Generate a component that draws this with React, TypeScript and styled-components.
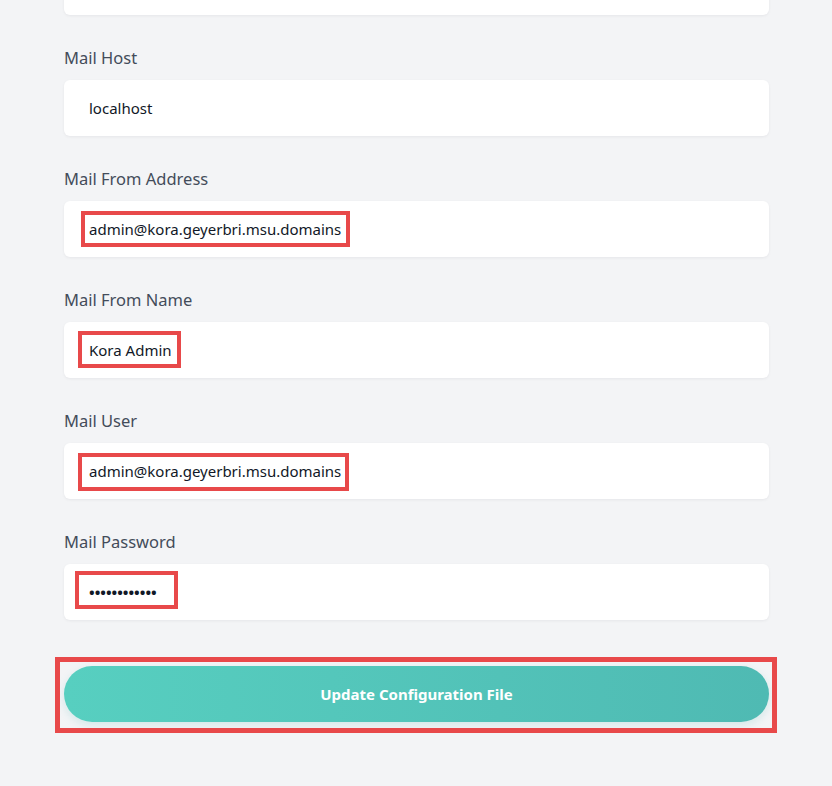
import { createGlobalStyle } from "styled-components";
import styled from "styled-components";

const fields = [
  { label: "Mail Host", value: "localhost" },
  {
    label: "Mail From Address",
    value: "admin@kora.geyerbri.msu.domains",
    mark: { left: 17, top: 10, width: 269, height: 36 },
  },
  {
    label: "Mail From Name",
    value: "Kora Admin",
    mark: { left: 14, top: 9, width: 103, height: 37 },
  },
  {
    label: "Mail User",
    value: "admin@kora.geyerbri.msu.domains",
    mark: { left: 14, top: 10, width: 271, height: 38 },
  },
  {
    label: "Mail Password",
    value: "••••••••••••",
    secret: true,
    mark: { left: 11, top: 7, width: 103, height: 38 },
  },
];

type MarkBox = { left: number; top: number; width: number; height: number };

export default function App() {
  return (
    <>
      <GlobalStyle />
      <Page>
        <Form>
          <PrevInput />
          {fields.map((field) => (
            <Field key={field.label}>
              <Label>{field.label}</Label>
              <Input>
                <Value $secret={field.secret}>{field.value}</Value>
                {field.mark && <Mark $box={field.mark} $thick={4} />}
              </Input>
            </Field>
          ))}
          <ButtonWrap>
            <SubmitButton type="button">Update Configuration File</SubmitButton>
            <Mark $box={{ left: -9, top: -9, width: 722, height: 76 }} $thick={5} />
          </ButtonWrap>
        </Form>
      </Page>
    </>
  );
}

const GlobalStyle = createGlobalStyle`
  html, body {
    margin: 0;
    padding: 0;
    background: #f3f4f6;
    overflow: hidden;
  }

  body {
    font-family: "Noto Sans", "Open Sans", sans-serif;
  }
`;

const Page = styled.div`
  min-height: 786px;
  background: #f3f4f6;
  padding: 0 63px 0 64px;
`;

const Form = styled.div`
  width: 705px;
  display: flex;
  flex-direction: column;
  gap: 32px;
`;

const PrevInput = styled.div`
  height: 56px;
  margin-top: -41px;
  background: #fff;
  border-radius: 6px;
  box-shadow: 0 1px 3px rgba(15, 23, 42, 0.06);
`;

const Field = styled.div`
  display: flex;
  flex-direction: column;
  gap: 11px;
`;

const Label = styled.label`
  font-size: 16.5px;
  line-height: 22px;
  color: #434c5a;
`;

const Input = styled.div`
  position: relative;
  height: 56px;
  display: flex;
  align-items: center;
  padding-left: 25px;
  background: #fff;
  border-radius: 6px;
  box-shadow: 0 1px 3px rgba(15, 23, 42, 0.06);
`;

const Value = styled.span<{ $secret?: boolean }>`
  font-size: 15px;
  font-weight: ${({ $secret }) => ($secret ? 700 : 400)};
  color: #111827;
`;

const Mark = styled.div<{ $box: MarkBox; $thick: number }>`
  position: absolute;
  left: ${({ $box }) => $box.left}px;
  top: ${({ $box }) => $box.top}px;
  width: ${({ $box }) => $box.width}px;
  height: ${({ $box }) => $box.height}px;
  box-sizing: border-box;
  border: ${({ $thick }) => $thick}px solid #e8494a;
  pointer-events: none;
`;

const ButtonWrap = styled.div`
  position: relative;
  margin-top: 14px;
`;

const SubmitButton = styled.button`
  width: 100%;
  height: 56px;
  border: none;
  border-radius: 28px;
  background: linear-gradient(90deg, #57cfc0 0%, #4fbab3 100%);
  box-shadow: 0 3px 8px rgba(79, 186, 179, 0.2);
  color: #fff;
  font-family: "Noto Sans", "Open Sans", sans-serif;
  font-size: 15px;
  font-weight: 700;
  cursor: pointer;
`;
